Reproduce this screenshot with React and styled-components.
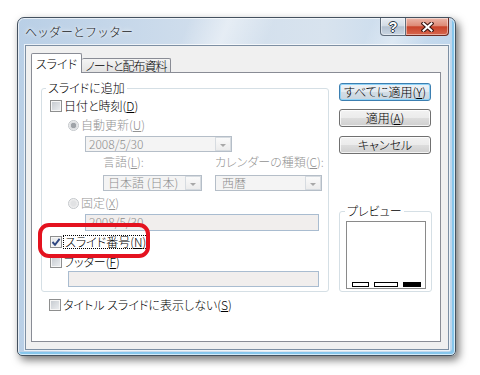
import React from 'react';
import styled, { createGlobalStyle } from 'styled-components';

const GlobalStyle = createGlobalStyle`
  html, body {
    margin: 0;
    padding: 0;
    background: #ffffff;
  }
  *, *::before, *::after {
    box-sizing: border-box;
  }
`;

const Page = styled.div`
  width: 480px;
  height: 375px;
  overflow: hidden;
  padding: 17px 0 0 17px;
  background: #fff;
  font-family: "Noto Sans CJK JP", "Noto Sans", sans-serif;
  font-size: 12px;
  font-weight: 300;
  font-feature-settings: "palt";
  color: #111;
`;

const Window = styled.div`
  width: 439px;
  height: 339px;
  display: flex;
  flex-direction: column;
  padding: 0 6px 5px 7px;
  border: 1px solid #44515f;
  border-radius: 7px 7px 5px 5px;
  background:
    linear-gradient(112deg, rgba(255,255,255,0) 30%, rgba(255,255,255,.45) 37%, rgba(255,255,255,0) 45%, rgba(255,255,255,0) 62%, rgba(255,255,255,.35) 67%, rgba(255,255,255,0) 73%),
    linear-gradient(90deg, #b9cfe6 0%, #cfddec 40%, #d8e3ee 70%, #bfd6ec 100%);
  box-shadow:
    3px 4px 9px rgba(0, 0, 0, .55),
    inset 0 0 0 1px rgba(255, 255, 255, .65),
    inset -3px -3px 0 0 #86c6ec;
`;

const TitleBar = styled.div`
  height: 27px;
  display: flex;
  align-items: flex-start;
`;

const Title = styled.div`
  padding-top: 6px;
  line-height: 16px;
  color: #1c1c1c;
  font-feature-settings: normal;
  text-shadow: 0 0 6px #fff, 0 0 3px #fff;
`;

const CaptionButtons = styled.div`
  margin-left: auto;
  display: flex;
`;

const CaptionButton = styled.div`
  width: ${p => p.$w}px;
  height: 18px;
  display: flex;
  align-items: center;
  justify-content: center;
  border: 1px solid ${p => (p.$close ? '#6b2a22' : '#5f6c7b')};
  border-top: none;
  border-left: ${p => (p.$close ? 'none' : undefined)};
  border-radius: ${p => (p.$close ? '0 0 4px 0' : '0 0 0 4px')};
  background: ${p =>
    p.$close
      ? 'linear-gradient(#ebb6a9 0%, #de8b77 45%, #c9432a 52%, #d6674f 100%)'
      : 'linear-gradient(#e8edf3 0%, #d3dce6 45%, #b4c2d1 52%, #c9d5e2 100%)'};
  box-shadow: inset 0 0 0 1px rgba(255, 255, 255, .45);
`;

const HelpGlyph = styled.span`
  font-family: "Liberation Sans", Arial, sans-serif;
  font-weight: bold;
  font-size: 14px;
  line-height: 14px;
  color: #fff;
  text-shadow: 1px 0 0 #2b3744, -1px 0 0 #2b3744, 0 1px 0 #2b3744, 0 -1px 0 #2b3744;
`;

const Client = styled.div`
  flex: 1;
  display: flex;
  flex-direction: column;
  padding: 7px 7px 7px 5px;
  background: #f0f0f0;
  border: 1px solid #7d8fa3;
  box-shadow: 0 0 0 1px rgba(255, 255, 255, .7);
`;

const TabStrip = styled.div`
  display: flex;
  align-items: flex-end;
  height: 20px;
  margin-bottom: -1px;
  position: relative;
  z-index: 1;
`;

const Tab = styled.div`
  width: ${p => p.$w}px;
  height: ${p => (p.$active ? 20 : 14)}px;
  margin-bottom: ${p => (p.$active ? 0 : 1)}px;
  display: flex;
  align-items: center;
  justify-content: center;
  border: 1px solid #898c95;
  border-bottom: none;
  border-left: ${p => (p.$active ? '1px solid #898c95' : 'none')};
  border-radius: 2px 2px 0 0;
  background: ${p => (p.$active ? '#fff' : 'linear-gradient(#f4f4f4, #e3e3e3)')};
  line-height: 14px;
  white-space: nowrap;
  letter-spacing: ${p => (p.$active ? 0 : -1)}px;
  color: #000;
`;

const Panel = styled.div`
  flex: 1;
  display: flex;
  flex-direction: column;
  padding: 8px 7px 0 9px;
  border: 1px solid #898c95;
  background: #fff;
`;

const MainRow = styled.div`
  display: flex;
  gap: 10px;
`;

const GroupBox = styled.fieldset`
  margin: 0;
  min-width: 0;
  width: ${p => p.$w}px;
  padding: ${p => p.$pad};
  border: 1px solid #d5dfe5;
  border-radius: 3px;
  display: flex;
  flex-direction: column;
`;

const Legend = styled.legend`
  height: 14px;
  padding: 0 2px;
  margin-left: ${p => p.$offset}px;
  line-height: 14px;
  color: #000;
`;

const Row = styled.div`
  height: 16px;
  display: flex;
  align-items: center;
  gap: 2px;
  margin-top: ${p => p.$top || 0}px;
  margin-left: ${p => p.$indent || 0}px;
`;

const HighlightRow = styled(Row)`
  position: relative;
`;

const Highlight = styled.span`
  position: absolute;
  left: -12px;
  top: -11px;
  width: 112px;
  height: 35px;
  border: 4px solid #e4121f;
  border-radius: 11px;
  pointer-events: none;
`;

const Text = styled.span`
  line-height: 16px;
  white-space: nowrap;
  color: ${p => (p.$disabled ? '#939393' : '#000')};
`;

const FocusText = styled(Text)`
  line-height: 12px;
  padding: 0 1px;
  outline: 1px dotted #000;
`;

const Key = styled.u`
  text-decoration: underline;
  text-underline-offset: 1px;
`;

const CheckBox = styled.span`
  width: 12px;
  height: 12px;
  flex: none;
  display: flex;
  align-items: center;
  justify-content: center;
  border: 1px solid #8e8f8f;
  background: ${p =>
    p.$checked
      ? 'linear-gradient(135deg, #e3e6e9 0%, #f8f8f8 100%)'
      : 'linear-gradient(135deg, #c3c8ce 0%, #eef0f2 100%)'};
  box-shadow: inset 0 0 0 1px #f6f6f6;
`;

const Radio = styled.span`
  width: 11px;
  height: 11px;
  flex: none;
  border-radius: 50%;
  border: 1px solid #c3c7cb;
  background: ${p =>
    p.$checked
      ? 'radial-gradient(circle, #9fa3a8 0 2.5px, #dcdee1 3px 3.5px, #f3f3f3 4.5px)'
      : 'radial-gradient(circle, #e1e2e4 0 2.5px, #f4f4f4 4.5px)'};
`;

const Select = styled.div`
  width: ${p => p.$w}px;
  height: 16px;
  flex: none;
  display: flex;
  align-items: center;
  padding-left: ${p => p.$pad || 3}px;
  border: 1px solid #b5bec8;
  background: #f4f4f4;
  color: #8d8d8d;
  line-height: 14px;
  white-space: nowrap;
`;

const DropButton = styled.span`
  margin-left: auto;
  width: 16px;
  height: 14px;
  flex: none;
  display: flex;
  align-items: center;
  justify-content: center;
  border: 1px solid #d6dbe0;
  background: linear-gradient(#fafafa, #ececec);

  &::after {
    content: '';
    margin-top: 2px;
    border-left: 3px solid transparent;
    border-right: 3px solid transparent;
    border-top: 3px solid #a8a8a8;
  }
`;

const TextBox = styled.div`
  width: ${p => p.$w}px;
  height: ${p => p.$h}px;
  flex: none;
  display: flex;
  align-items: center;
  padding-left: 3px;
  border: 1px solid #a9bcd0;
  background: #f1eeed;
  color: #8d8d8d;
  line-height: 14px;
`;

const FieldGrid = styled.div`
  display: grid;
  grid-template-columns: 112px 107px;
  grid-template-rows: 14px 16px;
  row-gap: 6px;
  margin: 3px 0 0 53px;
`;

const FieldLabel = styled.span`
  line-height: 14px;
  color: #939393;
  white-space: nowrap;
`;

const SideColumn = styled.div`
  width: 93px;
  display: flex;
  flex-direction: column;
`;

const Button = styled.button`
  width: 92px;
  height: 18px;
  margin: ${p => p.$top}px 0 0 0;
  padding: 0;
  font: inherit;
  line-height: 14px;
  color: #000;
  border: 1px solid ${p => (p.$default ? '#3c7fb1' : '#707070')};
  border-radius: 3px;
  background: ${p =>
    p.$default
      ? 'linear-gradient(#eef3f7 0%, #e2e9ef 50%, #d3dde5 50%, #c9d5df 100%)'
      : 'linear-gradient(#f2f2f2 0%, #ebebeb 50%, #dddddd 50%, #cfcfcf 100%)'};
  box-shadow: inset 0 0 0 1px ${p => (p.$default ? '#8fd3f7' : 'rgba(255,255,255,.75)')};
`;

const PreviewGroup = styled(GroupBox)`
  margin-top: auto;
`;

const PreviewBox = styled.div`
  width: 80px;
  height: 68px;
  margin-top: 3px;
  display: flex;
  align-items: flex-end;
  justify-content: space-between;
  padding: 0 4px 1px 5px;
  border: 1px solid #8a8a8a;
  background: #fff;
`;

const Slot = styled.span`
  width: ${p => p.$w}px;
  height: 5px;
  border: 1px solid #000;
  background: ${p => (p.$filled ? '#000' : '#fff')};
`;

const CloseIcon = () => (
  <svg width="13" height="10" viewBox="0 0 13 10">
    <path d="M2.5 1.5 L10.5 8.5 M10.5 1.5 L2.5 8.5" stroke="#3a1511" strokeWidth="4.2" strokeLinecap="square" fill="none" />
    <path d="M2.5 1.5 L10.5 8.5 M10.5 1.5 L2.5 8.5" stroke="#fff" strokeWidth="2" strokeLinecap="square" fill="none" />
  </svg>
);

const CheckMark = () => (
  <svg width="10" height="10" viewBox="0 0 10 10">
    <path d="M1.5 5 L4 7.8 L8.6 1.8" stroke="#2e4680" strokeWidth="1.9" fill="none" />
  </svg>
);

export default function App() {
  return (
    <Page>
      <GlobalStyle />
      <Window>
        <TitleBar>
          <Title>ヘッダーとフッター</Title>
          <CaptionButtons>
            <CaptionButton $w={26}>
              <HelpGlyph>?</HelpGlyph>
            </CaptionButton>
            <CaptionButton $w={43} $close>
              <CloseIcon />
            </CaptionButton>
          </CaptionButtons>
        </TitleBar>

        <Client>
          <TabStrip>
            <Tab $w={51} $active>スライド</Tab>
            <Tab $w={89}>ノートと配布資料</Tab>
          </TabStrip>

          <Panel>
            <MainRow>
              <GroupBox $w={288} $pad="0 0 4px 8px">
                <Legend $offset={-4}>スライドに追加</Legend>

                <Row $top={3}>
                  <CheckBox />
                  <Text>日付と時刻(<Key>D</Key>)</Text>
                </Row>
                <Row $top={3} $indent={18}>
                  <Radio $checked />
                  <Text $disabled>自動更新(<Key>U</Key>)</Text>
                </Row>
                <Row $top={3} $indent={35}>
                  <Select $w={147}>
                    2008/5/30
                    <DropButton />
                  </Select>
                </Row>

                <FieldGrid>
                  <FieldLabel>言語(<Key>L</Key>):</FieldLabel>
                  <FieldLabel>カレンダーの種類(<Key>C</Key>):</FieldLabel>
                  <Select $w={99} $pad={4}>
                    日本語 (日本)
                    <DropButton />
                  </Select>
                  <Select $w={107} $pad={6}>
                    西暦
                    <DropButton />
                  </Select>
                </FieldGrid>

                <Row $top={4} $indent={18}>
                  <Radio />
                  <Text $disabled>固定(<Key>X</Key>)</Text>
                </Row>
                <Row $top={3} $indent={35}>
                  <TextBox $w={234} $h={17}>2008/5/30</TextBox>
                </Row>

                <HighlightRow $top={4}>
                  <CheckBox $checked>
                    <CheckMark />
                  </CheckBox>
                  <FocusText>スライド番号(<Key>N</Key>)</FocusText>
                  <Highlight />
                </HighlightRow>
                <Row $top={4}>
                  <CheckBox />
                  <Text>フッター(<Key>F</Key>)</Text>
                </Row>
                <Row $top={1} $indent={18}>
                  <TextBox $w={251} $h={16} />
                </Row>
              </GroupBox>

              <SideColumn>
                <Button $default $top={2}>すべてに適用(<Key>Y</Key>)</Button>
                <Button $top={8}>適用(<Key>A</Key>)</Button>
                <Button $top={9}>キャンセル</Button>

                <PreviewGroup $w={93} $pad="0 0 2px 6px">
                  <Legend $offset={-1}>プレビュー</Legend>
                  <PreviewBox>
                    <Slot $w={17} />
                    <Slot $w={24} />
                    <Slot $w={18} $filled />
                  </PreviewBox>
                </PreviewGroup>
              </SideColumn>
            </MainRow>

            <Row $top={5} $indent={8}>
              <CheckBox />
              <Text>タイトル スライドに表示しない(<Key>S</Key>)</Text>
            </Row>
          </Panel>
        </Client>
      </Window>
    </Page>
  );
}
